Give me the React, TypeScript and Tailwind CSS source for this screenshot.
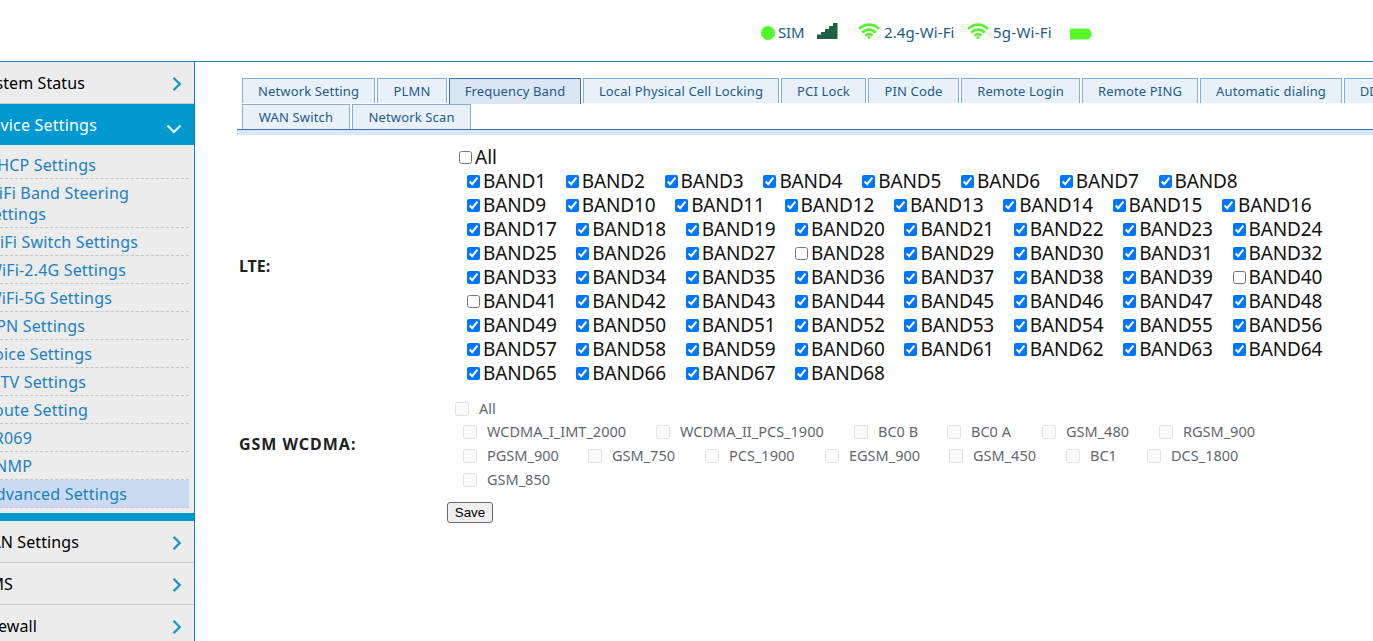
import React from "react";

type Tab = { label: string; width: string; active?: boolean };

const firstRowTabs: Tab[] = [
  { label: "Network Setting", width: "w-[133px]" },
  { label: "PLMN", width: "w-[70px]" },
  { label: "Frequency Band", width: "w-[132px]", active: true },
  { label: "Local Physical Cell Locking", width: "w-[196px]" },
  { label: "PCI Lock", width: "w-[85px]" },
  { label: "PIN Code", width: "w-[91px]" },
  { label: "Remote Login", width: "w-[119px]" },
  { label: "Remote PING", width: "w-[116px]" },
  { label: "Automatic dialing", width: "w-[142px]" },
  { label: "DDNS", width: "w-[68px]" },
];

const secondRowTabs: Tab[] = [
  { label: "WAN Switch", width: "w-[108px]" },
  { label: "Network Scan", width: "w-[119px]" },
];

const subItems = [
  { label: "WiFi Switch Settings", end: "w-[138px]" },
  { label: "WiFi-2.4G Settings", end: "w-[126px]" },
  { label: "WiFi-5G Settings", end: "w-[112px]" },
  { label: "VPN Settings", end: "w-[85px]" },
  { label: "Voice Settings", end: "w-[92px]" },
  { label: "IPTV Settings", end: "w-[86px]" },
  { label: "Route Setting", end: "w-[88px]" },
  { label: "TR069", end: "w-[32px]" },
  { label: "SNMP", end: "w-[32px]" },
  { label: "Advanced Settings", end: "w-[127px]", active: true },
];

const bandRows: number[][] = [
  ...Array.from({ length: 8 }, (_, r) => Array.from({ length: 8 }, (_, c) => r * 8 + c + 1)),
  [65, 66, 67, 68],
];
const uncheckedBands = new Set([28, 40, 41]);

const gsmRows = [
  [
    { label: "WCDMA_I_IMT_2000", width: "w-[193px]" },
    { label: "WCDMA_II_PCS_1900", width: "w-[198px]" },
    { label: "BC0 B", width: "w-[93px]" },
    { label: "BC0 A", width: "w-[95px]" },
    { label: "GSM_480", width: "w-[117px]" },
    { label: "RGSM_900", width: "w-[110px]" },
  ],
  [
    { label: "PGSM_900", width: "w-[125px]" },
    { label: "GSM_750", width: "w-[117px]" },
    { label: "PCS_1900", width: "w-[120px]" },
    { label: "EGSM_900", width: "w-[124px]" },
    { label: "GSM_450", width: "w-[117px]" },
    { label: "BC1", width: "w-[81px]" },
    { label: "DCS_1800", width: "w-[110px]" },
  ],
  [{ label: "GSM_850", width: "w-[117px]" }],
];

function EndText({ text, end }: { text: string; end: string }) {
  return (
    <span className={`flex shrink-0 justify-end overflow-hidden whitespace-nowrap ${end}`}>
      <span className="shrink-0">{text}</span>
    </span>
  );
}

function Chevron({ down = false }: { down?: boolean }) {
  return down ? (
    <svg width="16" height="10" viewBox="0 0 16 10" fill="none" stroke="#e6fbff" strokeWidth="2.2">
      <path d="M1.5 1.5 8 8l6.500-6.500" />
    </svg>
  ) : (
    <svg width="10" height="16" viewBox="0 0 10 16" fill="none" stroke="#1795cf" strokeWidth="2.3">
      <path d="M1.500 1.800 7.700 8l-6.200 6.200" />
    </svg>
  );
}

function MenuRow({ text, end }: { text: string; end: string }) {
  return (
    <div className="flex h-[42px] shrink-0 items-center justify-between border-b border-[#c9c9c9] pr-[12px] text-black">
      <EndText text={text} end={end} />
      <span className="pt-[3px]">
        <Chevron />
      </span>
    </div>
  );
}

function Wifi() {
  return (
    <svg className="mt-[1px]" width="22" height="16" viewBox="0 0 22 16" fill="none" stroke="#5df032" strokeWidth="2.7">
      <path d="M1 6C6.500.2 15.500.2 21 6" />
      <path d="M4.200 9.600c3.800-4 9.800-4 13.600 0" />
      <path d="M7.500 12.700c2-2 5-2 7 0" />
      <circle cx="11" cy="14.400" r="1.500" fill="#5df032" stroke="none" />
    </svg>
  );
}

function TabItem({ tab }: { tab: Tab }) {
  return (
    <div
      className={`flex shrink-0 justify-center border border-b-0 pt-[2px] leading-[20px] whitespace-nowrap ${tab.width} ${
        tab.active ? "h-[26px] border-[#3a74a8] bg-[#dae6f3]" : "h-[25px] border-[#80b0d3] bg-[#e8f1fa]"
      }`}
    >
      {tab.label}
    </div>
  );
}

export default function App() {
  return (
    <div className="flex h-[641px] w-[1373px] flex-col overflow-hidden bg-white font-['Noto_Sans','Open_Sans',sans-serif]">
      <header className="flex h-[62px] shrink-0 items-center border-b border-[#1f86ae] pl-[761px] text-[15px] text-[#1b5a86]">
        <div className="flex h-[20px] w-[340px] items-center">
          <span className="mt-[5px] h-[14px] w-[14px] rounded-full bg-[#52f72b]" />
          <span className="mt-[4px] ml-[3px] w-[39px] tracking-[-0.2px]">SIM</span>
          <svg width="21" height="17" viewBox="0 0 21 17" fill="#1f6143">
            <path d="M0 12.500h4V17H0zM4 10h4v7H4zM8 7h4v10H8zM12 4h4v13h-4zM16 1h4.500v16H16z" />
          </svg>
          <span className="ml-[20px] flex w-[109px] items-center gap-[4px] whitespace-nowrap">
            <Wifi />
            <span className="pt-[4px] tracking-[0.1px]">2.4g-Wi-Fi</span>
          </span>
          <span className="flex w-[103px] shrink-0 items-center gap-[4px] whitespace-nowrap">
            <Wifi />
            <span className="pt-[4px] tracking-[0.25px]">5g-Wi-Fi</span>
          </span>
          <svg className="mt-[6px] shrink-0" width="22" height="12" viewBox="0 0 22 12" fill="#58fa2c">
            <path d="M0 .500h18.500L21.500 4v4l-3 3.500H0z" />
          </svg>
        </div>
      </header>

      <div className="flex min-h-0 flex-1">
        <aside className="flex w-[195px] shrink-0 flex-col overflow-hidden border-r border-[#1282b0] bg-[#ececec] text-[16px] tracking-[0.1px]">
          <MenuRow text="System Status" end="w-[85px]" />
          <div className="flex h-[41px] shrink-0 items-center justify-between bg-[#0099cf] pr-[12px] tracking-[0.2px] text-white">
            <EndText text="Device Settings" end="w-[97px]" />
            <span className="pt-[8px]">
              <Chevron down />
            </span>
          </div>
          <nav className="flex shrink-0 flex-col pt-[6px] pr-[5px] pb-[5px] leading-[21px] tracking-[0.18px] text-[#1b80c3]">
            <div className="flex h-[28px] items-center border-b border-dashed border-[#c4c4c4] pt-[2px]">
              <EndText text="DHCP Settings" end="w-[96px]" />
            </div>
            <div className="flex h-[49px] flex-col justify-center border-b border-dashed border-[#c4c4c4] pt-[2px]">
              <EndText text="WiFi Band Steering" end="w-[129px]" />
              <EndText text="Settings" end="w-[46px]" />
            </div>
            {subItems.map((item) => (
              <div
                key={item.label}
                className={`flex h-[28px] items-center border-b border-dashed border-[#c4c4c4] pt-[2px] ${
                  item.active ? "bg-[#cadbf1]" : ""
                }`}
              >
                <EndText text={item.label} end={item.end} />
              </div>
            ))}
          </nav>
          <div className="h-[8px] shrink-0 bg-[#0099cf]" />
          <MenuRow text="LAN Settings" end="w-[79px]" />
          <MenuRow text="SMS" end="w-[13px]" />
          <MenuRow text="Firewall" end="w-[37px]" />
        </aside>

        <main className="flex min-w-0 flex-1 flex-col overflow-hidden pt-[16px] pl-[42px]">
          <div className="flex h-[57px] shrink-0 flex-col border-b-[5px] border-[#dae6f3] text-[13px] tracking-[0.15px] text-[#1f5a8a]">
            <div className="flex h-[26px] gap-[2px] pl-[5px]">
              {firstRowTabs.map((tab) => (
                <TabItem key={tab.label} tab={tab} />
              ))}
            </div>
            <div className="flex h-[26px] gap-[2px] border-b border-[#3a74a8] pl-[5px]">
              {secondRowTabs.map((tab) => (
                <TabItem key={tab.label} tab={tab} />
              ))}
            </div>
          </div>

          <section className="flex h-[251px] shrink-0 items-center pt-[10px]">
            <h2 className="w-[222px] shrink-0 pl-[2px] text-[16px] font-bold text-[#222]">LTE:</h2>
            <div className="flex h-[241px] flex-col text-[19px] leading-[24px] text-[#111]">
              <label className="flex h-[24px] items-center gap-[3px]">
                <input type="checkbox" className="m-0 h-[13px] w-[13px]" />
                All
              </label>
              {bandRows.map((row) => (
                <div key={row[0]} className="flex h-[24px] pl-[8px] tracking-[-0.15px]">
                  {row.map((n) => (
                    <label
                      key={n}
                      className={`flex shrink-0 items-center gap-[3px] whitespace-nowrap ${
                        n < 10 ? "w-[98.8px]" : "w-[109.36px]"
                      }`}
                    >
                      <input type="checkbox" defaultChecked={!uncheckedBands.has(n)} className="m-0 h-[13px] w-[13px]" />
                      {`BAND${n}`}
                    </label>
                  ))}
                </div>
              ))}
            </div>
          </section>

          <section className="mt-[3px] flex h-[110px] shrink-0 items-center">
            <h2 className="w-[218px] shrink-0 pl-[2px] text-[16px] font-bold tracking-[0.98px] text-[#222]">
              GSM WCDMA:
            </h2>
            <div className="flex h-[94px] flex-col text-[14.500px] text-[#63676e]">
              <label className="flex h-[23px] shrink-0 items-center gap-[10px]">
                <input type="checkbox" disabled className="m-0 h-[14px] w-[14px] opacity-60" />
                All
              </label>
              {gsmRows.map((row) => (
                <div key={row[0].label} className="flex h-[24px] shrink-0 pl-[8px]">
                  {row.map((item) => (
                    <label key={item.label} className={`flex shrink-0 items-center gap-[10px] whitespace-nowrap ${item.width}`}>
                      <input type="checkbox" disabled className="m-0 h-[14px] w-[14px] opacity-60" />
                      {item.label}
                    </label>
                  ))}
                </div>
              ))}
            </div>
          </section>

          <button className="mt-[3px] ml-[210px] h-[21px] w-[46px] shrink-0 rounded-[3px] border border-[#6b6b6b] bg-[#efefef] font-['Liberation_Sans',Arial,sans-serif] text-[13.33px] leading-none text-black">
            Save
          </button>
        </main>
      </div>
    </div>
  );
}
